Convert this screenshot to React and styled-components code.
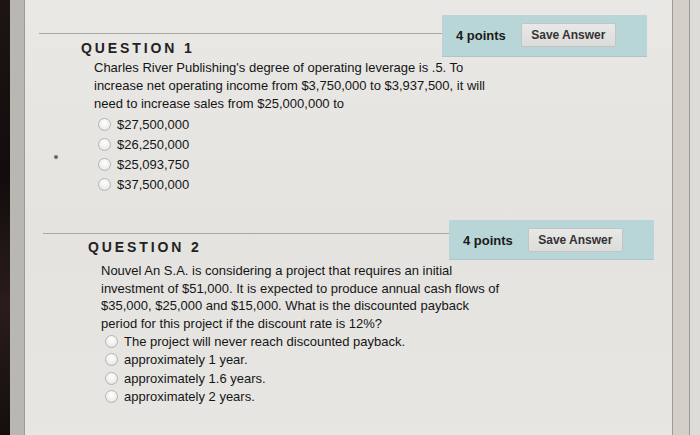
import React from 'react';
import styled, { createGlobalStyle } from 'styled-components';

const Global = createGlobalStyle`
	html, body { margin: 0; padding: 0; }
	body {
		width: 700px;
		height: 435px;
		overflow: hidden;
		background: #1b1413;
		font-family: "Liberation Sans", Arial, sans-serif;
	}
`;

const Frame = styled.div`
	display: flex;
	width: 700px;
	height: 435px;
`;

const DarkEdge = styled.div`
	width: 10px;
	background: linear-gradient(180deg, #1e1514 0%, #120c0c 40%, #2a1d1b 70%, #140e0d 100%);
`;

const Bezel = styled.div`
	width: ${(p) => p.w}px;
	background: ${(p) => p.bg};
	border-${(p) => p.side}: 1px solid #9d9b97;
`;

const Page = styled.div`
	position: relative;
	flex: 1;
	background: linear-gradient(180deg, #e9e8e5 0%, #e4e3e0 55%, #e7e6e3 100%);
	padding-top: 15px;
	box-sizing: border-box;
`;

const Speck = styled.div`
	position: absolute;
	left: 29px;
	top: 155px;
	width: 4px;
	height: 4px;
	border-radius: 50%;
	background: #6b6765;
`;

const Question = styled.section`
	margin-bottom: ${(p) => p.mb || 0}px;
`;

const Header = styled.div`
	display: flex;
	align-items: flex-start;
	margin-left: ${(p) => 14 + p.shift / 2}px;
	margin-right: ${(p) => 25 - p.shift}px;
`;

const TitleCell = styled.div`
	flex: 1;
	margin-top: ${(p) => p.lineTop}px;
	border-top: 1px solid #a9a8a5;
	padding: ${(p) => p.titleGap}px 0 0 ${(p) => 42 + p.shift / 2}px;
`;

const Title = styled.h2`
	margin: 0;
	font-size: 14px;
	font-weight: bold;
	letter-spacing: 2.9px;
	color: #222;
	line-height: 16px;
`;

const PointsBox = styled.div`
	display: flex;
	align-items: flex-start;
	width: 205px;
	height: ${(p) => p.h}px;
	box-sizing: border-box;
	padding: 8px 0 0 14px;
	background: #b8d6d8;
	border-bottom: 1px solid #a9c6c8;
`;

const Points = styled.span`
	font-size: 13px;
	font-weight: bold;
	color: #1a1a1a;
	line-height: 16px;
	margin-top: 5px;
`;

const SaveButton = styled.button`
	margin-left: 15px;
	width: 95px;
	height: 24px;
	padding: 0;
	border: 1px solid #c4c4c2;
	border-radius: 2px;
	background: linear-gradient(180deg, #e8e8e6, #dcdcda);
	font-family: "Liberation Sans", Arial, sans-serif;
	font-size: 12px;
	font-weight: bold;
	color: #333;
`;

const Body = styled.div`
	margin: 2px 0 0 ${(p) => 69 + p.shift}px;
	color: #151515;
	font-size: 13px;
`;

const Prompt = styled.p`
	margin: 0;
	line-height: ${(p) => p.lh}px;
`;

const Options = styled.ul`
	list-style: none;
	margin: ${(p) => p.mt}px 0 0 4px;
	padding: 0;
`;

const Option = styled.li`
	display: flex;
	align-items: center;
	height: ${(p) => p.h}px;
	font-size: 13px;
	color: #151515;
`;

const Radio = styled.span`
	width: 11px;
	height: 11px;
	border-radius: 50%;
	border: 1px solid #b4b4b2;
	background: radial-gradient(circle at 50% 35%, #ffffff 0%, #eeeeec 60%, #d6d6d4 100%);
	margin-right: 6px;
	flex-shrink: 0;
`;

const questions = [
	{
		title: 'QUESTION 1',
		shift: 0,
		lineTop: 18,
		titleGap: 6,
		boxH: 42,
		lh: 18,
		rowH: 20,
		optTop: 1,
		mb: 26,
		lines: [
			"Charles River Publishing's degree of operating leverage is .5. To",
			'increase net operating income from $3,750,000 to $3,937,500, it will',
			'need to increase sales from $25,000,000 to',
		],
		options: ['$27,500,000', '$26,250,000', '$25,093,750', '$37,500,000'],
	},
	{
		title: 'QUESTION 2',
		shift: 7,
		lineTop: 13,
		titleGap: 5,
		boxH: 40,
		lh: 17.5,
		rowH: 18.5,
		optTop: 0,
		mb: 0,
		lines: [
			'Nouvel An S.A. is considering a project that requires an initial',
			'investment of $51,000. It is expected to produce annual cash flows of',
			'$35,000, $25,000 and $15,000. What is the discounted payback',
			'period for this project if the discount rate is 12%?',
		],
		options: [
			'The project will never reach discounted payback.',
			'approximately 1 year.',
			'approximately 1.6 years.',
			'approximately 2 years.',
		],
	},
];

export default function App() {
	return (
		<React.Fragment>
			<Global />
			<Frame>
				<DarkEdge />
				<Bezel w={14} bg="#b9b7b2" side="right" />
				<Page>
					<Speck />
					{questions.map((q) => (
						<Question key={q.title} mb={q.mb}>
							<Header shift={q.shift}>
								<TitleCell shift={q.shift} lineTop={q.lineTop} titleGap={q.titleGap}>
									<Title>{q.title}</Title>
								</TitleCell>
								<PointsBox h={q.boxH}>
									<Points>4 points</Points>
									<SaveButton>Save Answer</SaveButton>
								</PointsBox>
							</Header>
							<Body shift={q.shift}>
								<Prompt lh={q.lh}>
									{q.lines.map((l, i) => (
										<React.Fragment key={i}>
											{l}
											{i < q.lines.length - 1 && <br />}
										</React.Fragment>
									))}
								</Prompt>
								<Options mt={q.optTop}>
									{q.options.map((o) => (
										<Option key={o} h={q.rowH}>
											<Radio />
											{o}
										</Option>
									))}
								</Options>
							</Body>
						</Question>
					))}
				</Page>
				<Bezel w={16} bg="#d2d0c9" side="left" />
				<Bezel w={10} bg="#dedcd8" side="left" />
			</Frame>
		</React.Fragment>
	);
}
